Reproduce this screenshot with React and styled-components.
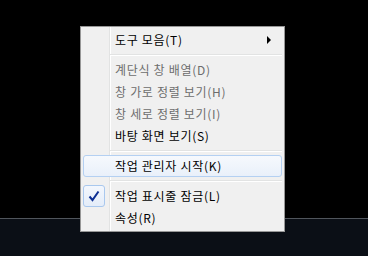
import React from "react";
import styled, { createGlobalStyle } from "styled-components";

const GlobalStyle = createGlobalStyle`
  html, body {
    margin: 0;
    padding: 0;
    background: #000;
  }
  body {
    font-family: "Noto Sans CJK KR", "Noto Sans", sans-serif;
  }
`;

const items = [
  { label: "도구 모음(T)", submenu: true },
  { separator: true },
  { label: "계단식 창 배열(D)", disabled: true },
  { label: "창 가로 정렬 보기(H)", disabled: true },
  { label: "창 세로 정렬 보기(I)", disabled: true },
  { label: "바탕 화면 보기(S)" },
  { separator: true },
  { label: "작업 관리자 시작(K)", hover: true },
  { separator: true },
  { label: "작업 표시줄 잠금(L)", checked: true },
  { label: "속성(R)" },
];

const App = () => {
  return (
    <Screen>
      <GlobalStyle />
      <Desktop />
      <Taskbar />
      <Menu>
        {items.map((item, i) =>
          item.separator ? (
            <Separator key={i} />
          ) : (
            <Item key={i} $disabled={item.disabled} $hover={item.hover}>
              {item.checked && (
                <CheckBox>
                  <svg width="12" height="12" viewBox="0 0 12 12">
                    <path
                      d="M1.5 6.5 L4.5 10 L10.5 1.5"
                      fill="none"
                      stroke="#0d2f93"
                      strokeWidth="2"
                    />
                  </svg>
                </CheckBox>
              )}
              <Label>{item.label}</Label>
              {item.submenu && <Arrow />}
            </Item>
          )
        )}
      </Menu>
    </Screen>
  );
};

const Screen = styled.div`
  position: relative;
  width: 368px;
  height: 256px;
  display: flex;
  flex-direction: column;
  overflow: hidden;
`;

const Desktop = styled.div`
  flex: 1;
  background: #000;
`;

const Taskbar = styled.div`
  height: 37px;
  background: #0b0f16;
  border-top: 1px solid #50555c;
`;

const Menu = styled.div`
  position: absolute;
  left: 80px;
  top: 26px;
  width: 199px;
  padding: 2px;
  border: 1px solid #979797;
  background: linear-gradient(
    to right,
    #f0f0f0 28px,
    #e2e3e3 28px,
    #e2e3e3 29px,
    #ffffff 29px,
    #ffffff 30px,
    #f0f0f0 30px
  );
`;

const Item = styled.div`
  position: relative;
  display: flex;
  align-items: center;
  height: 22px;
  box-sizing: border-box;
  padding: 0 10px 0 32px;
  font-size: 12px;
  letter-spacing: 0.7px;
  color: ${(p) => (p.$disabled ? "#6d6d6d" : "#000")};
  border: 1px solid ${(p) => (p.$hover ? "#b4d0f2" : "transparent")};
  border-radius: 3px;
  background: ${(p) =>
    p.$hover ? "linear-gradient(to bottom, #f6f9fd, #e9f0fa)" : "transparent"};
`;

const Label = styled.span`
  flex: 1;
  white-space: nowrap;
  line-height: 20px;
  margin-left: -1px;
`;

const Arrow = styled.span`
  width: 0;
  height: 0;
  border-left: 4px solid #000;
  border-top: 4px solid transparent;
  border-bottom: 4px solid transparent;
`;

const CheckBox = styled.span`
  position: absolute;
  left: -1px;
  top: -1px;
  width: 20px;
  height: 20px;
  display: flex;
  align-items: center;
  justify-content: center;
  border: 1px solid #a9c8ee;
  border-radius: 3px;
  background: linear-gradient(to bottom, #f3f7fd, #e4edf9);
`;

const Separator = styled.div`
  height: 8px;
  margin-left: 27px;
  display: flex;
  flex-direction: column;
  justify-content: center;

  &::before {
    content: "";
    display: block;
    height: 1px;
    background: #e2e3e3;
  }
  &::after {
    content: "";
    display: block;
    height: 1px;
    background: #ffffff;
  }
`;

export default App;
